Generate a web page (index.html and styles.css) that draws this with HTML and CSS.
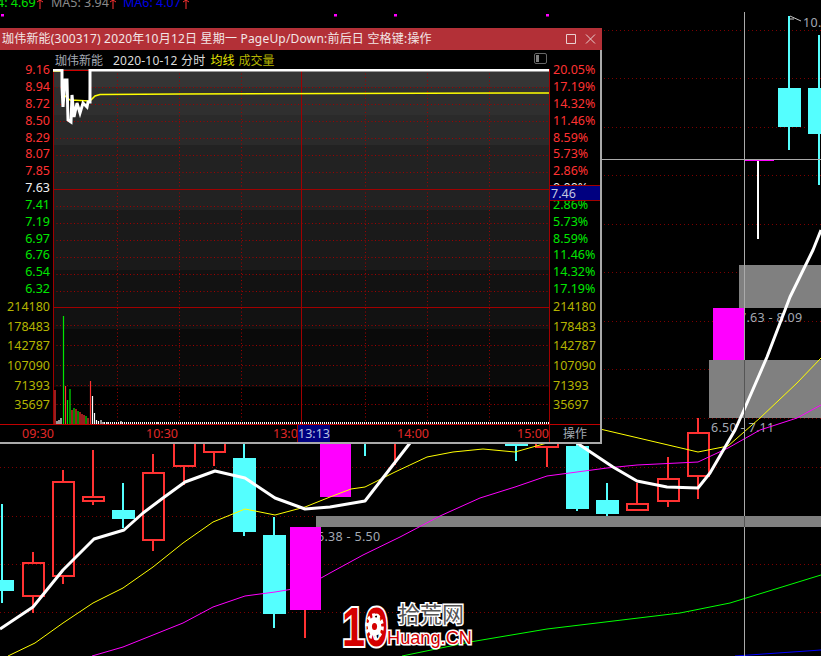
FILE: index.html
```html
<!DOCTYPE html>
<html lang="zh-CN">
<head>
<meta charset="utf-8">
<title>珈伟新能 K线</title>
<link rel="stylesheet" href="styles.css">
</head>
<body>
<div class="page">
  <svg class="kline" width="821" height="656" viewBox="0 0 821 656">
    <path class="grid" d="M0 30.5H821M0 78.5H821M0 127.5H821M0 175.5H821M0 224.5H821M0 272.5H821M0 321.5H821M0 369.5H821M0 418.5H821M0 467.5H821M0 516.5H821M0 564.5H821M0 612.5H821"/>
    <path class="dots" d="M1 14h3v2.500h-3zM334 14h3v2.500h-3zM394 14h3v2.500h-3zM546 14h3v2.500h-3z"/>
    <g class="ma-top">
      <text class="t-green" x="-3" y="7">4: 4.69</text>
      <text class="t-gray" x="51" y="7">MA5: 3.94</text>
      <text class="t-blue" x="123" y="7">MA6: 4.07</text>
      <path class="arrow" d="M40 0V9M113 0V9M186 0V9M37 2L40 0L43 2M110 2L113 0L116 2M183 2L186 0L189 2"/>
    </g>
    <rect class="zone" x="316" y="516" width="505" height="11"/>
    <rect class="zone" x="709" y="360" width="112" height="58"/>
    <rect class="zone" x="739" y="265" width="82" height="43"/>
    <text class="tag" x="739" y="322">7.63 - 8.09</text>
    <text class="tag" x="711" y="432">6.50 - 7.11</text>
    <text class="tag" x="317" y="541">6.38 - 5.50</text>
    <text class="tag" x="803" y="27">10.</text>
    <path class="hint" d="M790 16L801 21M790 19H794"/>

    <path class="wick-c" d="M2 504V603M123 483V528M244 443V536M274 517V628M365 443V456M516 443V461M577 443V511M607 483V516M789 16V150M819 35V185"/>
    <g class="body-c">
      <rect x="0" y="580" width="14" height="11"/>
      <rect x="112" y="510" width="23" height="9"/>
      <rect x="233" y="458" width="23" height="74"/>
      <rect x="263" y="535" width="23" height="79"/>
      <rect x="505" y="443" width="23" height="3"/>
      <rect x="566" y="446" width="23" height="63"/>
      <rect x="596" y="500" width="23" height="14"/>
      <rect x="778" y="88" width="23" height="39"/>
      <rect x="808" y="88" width="13" height="46"/>
    </g>
    <path class="wick-r" d="M33 552V562M33 596V613M63 470V481M63 576V584M93 450V496M93 500V505M153 454V472M153 540V551M184 466V485M214 452V466M305 610V638M395 443V465M547 447V467M637 483V503M637 510V511M668 457V478M668 501V507M698 418V432M698 476V499"/>
    <g class="body-r">
      <rect x="22.500" y="562.500" width="21" height="33"/>
      <rect x="52.500" y="481.500" width="21" height="94"/>
      <rect x="82.500" y="496.500" width="21" height="4"/>
      <rect x="142.500" y="472.500" width="21" height="67"/>
      <rect x="173.500" y="430" width="21" height="35.500"/>
      <rect x="203.500" y="430" width="21" height="21.500"/>
      <rect x="535.500" y="430" width="22" height="16.500"/>
      <rect x="626.500" y="503.500" width="21" height="6"/>
      <rect x="657.500" y="478.500" width="21" height="22"/>
      <rect x="687.500" y="432.500" width="21" height="43"/>
    </g>
    <g class="body-m">
      <rect x="290" y="527" width="31" height="83"/>
      <rect x="320" y="443" width="31" height="54"/>
      <rect x="713" y="308" width="31" height="52"/>
      <rect x="745" y="159" width="29" height="2"/>
    </g>
    <path class="wick-w" d="M758 161V239"/>

    <polyline class="ma ma-green" points="402,656 470,642 547,629 680,613 730,603 821,575"/>
    <polyline class="ma ma-blue" points="735,656 821,650"/>
    <polyline class="ma ma-magenta" points="92,656 123,647 153,635 183,623 213,607 245,596 275,592 305,587 330,573 363,555 400,537 440,516 480,498 515,487 547,476 577,472 607,468 637,465 698,462 728,448 760,430 797,418 821,405"/>
    <polyline class="ma ma-yellow" points="8,656 35,643 63,623 93,603 123,588 153,567 183,543 213,522 245,509 275,515 305,507 330,497 351,489 365,487 395,472 427,457 453,452 483,449 515,452 547,443 600,429 698,452 728,446 760,418 797,383 821,358"/>
    <polyline class="ma-white" points="0,629 33,607 63,570 94,539 124,530 143,513 163,498 185,482 215,471 245,478 275,498 305,509 330,507 365,501 410,443 430,420 560,425 577,443 613,467 637,481 667,487 698,488 710,473 735,430 744,410 767,357 790,297 813,250 821,230"/>

    <path class="cross" d="M744.500 12V656M602 159.500H821"/>
    <path class="cross-dark" d="M744.500 360V418M744.500 516V527"/>

    <g class="logo">
      <text class="logo-ten" x="342" y="646" textLength="46" lengthAdjust="spacingAndGlyphs">10</text>
      <g transform="translate(374.500 626.500) scale(0.85 1.2)">
        <circle class="gear-teeth" r="9"/>
        <circle class="gear-core" r="8"/>
        <circle class="gear-eye" r="3"/>
      </g>
      <text class="logo-cn" x="398" y="622">拾荒网</text>
      <text class="logo-en" x="387" y="644">Huang.CN</text>
    </g>
  </svg>

  <section class="window">
    <header class="titlebar">
      <span class="title">珈伟新能(300317) 2020年10月12日 星期一 PageUp/Down:前后日 空格键:操作</span>
      <svg class="winbtn" width="36" height="12" viewBox="0 0 36 12">
        <path d="M1.500 1.500H10.500V10.500H1.500ZM21 1.500L30 10.500M30 1.500L21 10.500"/>
      </svg>
    </header>
    <div class="frame">
      <div class="upper">
        <div class="axis axis-left">
          <div class="prices">
            <div class="up">9.16</div><div class="up">8.94</div><div class="up">8.72</div><div class="up">8.50</div><div class="up">8.29</div><div class="up">8.07</div><div class="up">7.85</div>
            <div class="flat">7.63</div>
            <div class="down">7.41</div><div class="down">7.19</div><div class="down">6.97</div><div class="down">6.76</div><div class="down">6.54</div><div class="down">6.32</div>
          </div>
          <div class="volumes">
            <div>214180</div><div>178483</div><div>142787</div><div>107090</div><div>71393</div><div>35697</div>
          </div>
        </div>
        <div class="chart-col">
          <div class="chart-head">
            <span class="h-name">珈伟新能</span>
            <span class="h-date">2020-10-12 分时</span>
            <span class="h-avg">均线</span>
            <span class="h-vol">成交量</span>
            <svg class="h-icon" width="13" height="11" viewBox="0 0 13 11">
              <rect class="h-icon-box" x="0.500" y="0.500" width="12" height="10" rx="1.500"/>
              <rect class="h-icon-fill" x="2" y="2" width="3" height="7"/>
            </svg>
          </div>
          <svg class="chart" width="497" height="355" viewBox="53 69 497 355">
            <path class="band-grid" d="M53 87.500H549M53 104.500H549M53 121.500H549M53 138.500H549M53 155.500H549M53 172.500H549M53 206.500H549M53 223.500H549M53 240.500H549M53 257.500H549M53 274.500H549M53 291.500H549M53 325.500H549M53 345.500H549M53 365.500H549M53 385.500H549M53 404.500H549"/>
            <path class="band-grid" d="M117.500 70V424M179.500 70V424M241.500 70V424M365.500 70V424M427.500 70V424M489.500 70V424"/>
            <path class="band-solid" d="M53 189.500H549M53 307.500H549M53.500 69V424M301.500 69V424M549.500 69V424"/>
            <polygon class="price-fill" points="62,70 62,87 63,107 65,80 67,80 68,120 71,122 72,95 74,117 77,103 80,113 83,103 87,107 88,102 90,70"/>
            <path class="top-red" d="M62 70.500H90"/>
            <polyline class="avg" points="53,71 62,71 62,87 64,95 70,100 90,101 95,96 100,94.500 182,94 549,93"/>
            <polyline class="price" points="53,70 62,70 62,87 63,107 65,80 67,80 68,120 71,122 72,95 74,117 77,103 80,113 83,103 87,107 88,102 90,102 90,70 549,70"/>
            <path class="v-red" d="M55 424V390M65.500 424V386M72 424V410M76 424V409M80 424V412M82 424V414M84 424V415M88 424V418M90.500 424V381"/>
            <path class="v-green" d="M63.500 424V316M67.500 424V400M70 424V389M74 424V408M78 424V411M86 424V416"/>
            <path class="v-white" d="M57 424V421M59 424V420M61 424V418M92.500 424V396M94.500 424V413M96.500 424V420M98.500 424V421M101 424V420M103 424V422M107 424V422M121 424V421M158 424V422"/>
            <path class="v-dash" d="M104 423H549"/>
          </svg>
        </div>
        <div class="axis axis-right">
          <div class="prices">
            <div class="up">20.05%</div><div class="up">17.19%</div><div class="up">14.32%</div><div class="up">11.46%</div><div class="up">8.59%</div><div class="up">5.73%</div><div class="up">2.86%</div>
            <div class="flat">0.00%</div>
            <div class="down">2.86%</div><div class="down">5.73%</div><div class="down">8.59%</div><div class="down">11.46%</div><div class="down">14.32%</div><div class="down">17.19%</div>
          </div>
          <div class="volumes">
            <div>214180</div><div>178483</div><div>142787</div><div>107090</div><div>71393</div><div>35697</div>
          </div>
          <div class="cursor-tag">7.46</div>
        </div>
      </div>
      <footer class="timebar">
        <div class="times">
          <span class="t1">09:30</span>
          <span class="t2">10:30</span>
          <span class="t3">13:00</span>
          <span class="t4">14:00</span>
          <span class="t5">15:00</span>
        </div>
        <div class="ops">操作</div>
        <div class="cursor-time">13:13</div>
      </footer>
    </div>
  </section>
</div>
</body>
</html>
```
FILE: styles.css
```css
* { box-sizing: border-box; }
html, body { margin: 0; padding: 0; background: #000; }
body { font-family: "Noto Sans", "Noto Sans CJK SC", sans-serif; }

.page { position: relative; width: 821px; height: 656px; overflow: hidden; background: #000; }

/* background candlestick canvas */
.kline { position: absolute; left: 0; top: 0; display: block; }
.kline text { font-family: "Noto Sans", "Noto Sans CJK SC", sans-serif; font-size: 12.5px; }
.grid { fill: none; stroke: #7c0000; stroke-width: 1; stroke-dasharray: 1 3; }
.dots { fill: #ff00ff; }
.t-green { fill: #00e600; }
.t-gray { fill: #8a8a8a; }
.t-blue { fill: #0000e6; }
.arrow { fill: none; stroke: #ff3232; stroke-width: 1; }
.zone { fill: #808080; }
.kline .tag { fill: #a3a9b3; letter-spacing: 0.3px; }
.hint { fill: none; stroke: #c8c8c8; stroke-width: 1; }
.wick-c { fill: none; stroke: #54ffff; stroke-width: 2; shape-rendering: crispEdges; }
.body-c rect { fill: #54ffff; }
.wick-r { fill: none; stroke: #ff3232; stroke-width: 2; shape-rendering: crispEdges; }
.body-r rect { fill: none; stroke: #ff3232; stroke-width: 2; shape-rendering: crispEdges; }
.body-m rect { fill: #ff00ff; }
.wick-w { fill: none; stroke: #fff; stroke-width: 2; shape-rendering: crispEdges; }
.ma { fill: none; stroke-width: 1; }
.ma-green { stroke: #00ff00; }
.ma-blue { stroke: #0000ff; }
.ma-magenta { stroke: #ff00ff; }
.ma-yellow { stroke: #ffff00; }
.ma-white { fill: none; stroke: #fff; stroke-width: 3; stroke-linejoin: round; }
.cross { fill: none; stroke: #aaa; stroke-width: 1; }
.cross-dark { fill: none; stroke: #555; stroke-width: 1; }

/* logo */
.kline .logo-ten { font-family: "Liberation Sans", sans-serif; font-weight: 700; font-size: 55px; fill: #d40000; stroke: #fff; stroke-width: 4px; paint-order: stroke; }
.gear-teeth { fill: none; stroke: #fff; stroke-width: 4; stroke-dasharray: 3 2.650; }
.gear-core { fill: #fff; }
.gear-eye { fill: #d40000; }
.kline .logo-cn { font-family: "Noto Sans CJK SC", sans-serif; font-size: 22px; fill: #555; stroke: #fff; stroke-width: 3px; paint-order: stroke; }
.kline .logo-en { font-family: "Liberation Sans", sans-serif; font-size: 18.200px; fill: #d40000; stroke: #fff; stroke-width: 3px; paint-order: stroke; }

/* popup window */
.window { position: absolute; left: 0; top: 28px; width: 602px; height: 415px; display: flex; flex-direction: column; background: #000; }
.titlebar { height: 22px; flex: none; display: flex; align-items: center; justify-content: space-between; padding: 0 1px 0 2px; background: #b33037; }
.title { color: #f2e6e6; font-size: 12px; line-height: 22px; letter-spacing: 0.2px; white-space: nowrap; }
.winbtn { display: block; }
.winbtn path { fill: none; stroke: #e9cfcf; stroke-width: 1; }

.frame { position: relative; flex: 1; display: flex; flex-direction: column; border-right: 2px solid #aaa; border-bottom: 2px solid #aaa; }
.upper { height: 374px; flex: none; display: flex; }
.axis { position: relative; flex: none; padding-top: 12.300px; font-size: 12.500px; white-space: nowrap; }
.axis-left { width: 53px; text-align: right; padding-right: 3px; }
.axis-right { width: 50px; padding-left: 3px; }
.prices div { height: 16.830px; line-height: 16.830px; }
.volumes { margin-top: -1px; color: #b4b400; }
.volumes div { height: 19.700px; line-height: 19.700px; }
.up { color: #ff3232; }
.down { color: #00e600; }
.flat { color: #f0f0f0; }
.cursor-tag { position: absolute; left: 0; top: 135px; width: 50px; height: 16px; padding-left: 1px; line-height: 15px; background: #000080; border-top: 1px solid #a00000; border-bottom: 1px solid #a00000; color: #c4c8e0; }

.chart-col { width: 497px; flex: none; display: flex; flex-direction: column; }
.chart-head { position: relative; height: 19px; flex: none; display: flex; align-items: center; padding-left: 2px; font-size: 12px; white-space: nowrap; }
.h-name { color: #a4aab4; margin-right: 10px; }
.h-date { color: #dcdcdc; margin-right: 5px; letter-spacing: 0.2px; }
.h-avg { color: #e6e600; margin-right: 4px; }
.h-vol { color: #b4b400; }
.h-icon { margin-left: auto; margin-right: 3px; margin-top: -3px; display: block; }
.h-icon-box { fill: none; stroke: #666; stroke-width: 1; }
.h-icon-fill { fill: #808080; }

.chart { display: block; flex: none; background: linear-gradient(to bottom, #353535 0, #353535 18px, #2f2f2f 18px, #2f2f2f 46px, #2a2a2a 46px, #2a2a2a 76px, #222 76px, #222 141px, #1a1a1a 141px, #1a1a1a 201px, #121212 201px, #121212 260px, #0a0a0a 260px, #0a0a0a 318px, #000 318px); }
.band-grid { fill: none; stroke: #a00000; stroke-width: 1; stroke-dasharray: 1 2.500; }
.band-solid { fill: none; stroke: #a00000; stroke-width: 1; }
.price-fill { fill: #000; }
.top-red { fill: none; stroke: #d00000; stroke-width: 1; }
.avg { fill: none; stroke: #ffff00; stroke-width: 1.500; }
.price { fill: none; stroke: #fff; stroke-width: 3; stroke-linejoin: miter; }
.v-red { fill: none; stroke: #ff3232; stroke-width: 1.200; }
.v-green { fill: none; stroke: #00e600; stroke-width: 1.200; }
.v-white { fill: none; stroke: #fff; stroke-width: 1.200; }
.v-dash { fill: none; stroke: #fff; stroke-width: 2; stroke-dasharray: 1 1; }

.timebar { position: relative; flex: 1; display: flex; border-top: 1px solid #c00000; font-size: 12.500px; line-height: 17px; white-space: nowrap; }
.times { width: 550px; flex: none; border-right: 1px solid #a00000; color: #e02828; display: flex; padding-left: 22px; overflow: hidden; }
.times span { width: 31px; flex: none; }
.t2 { margin-left: 93px; }
.t3 { margin-left: 96px; }
.t4 { margin-left: 93px; }
.t5 { margin-left: 89px; }
.ops { flex: 1; text-align: center; color: #a4aab4; font-size: 12px; }
.cursor-time { position: absolute; left: 297px; top: 0; width: 33px; height: 17px; text-align: center; background: #000080; border-left: 1px solid #a00000; color: #b8c0e0; }
```
